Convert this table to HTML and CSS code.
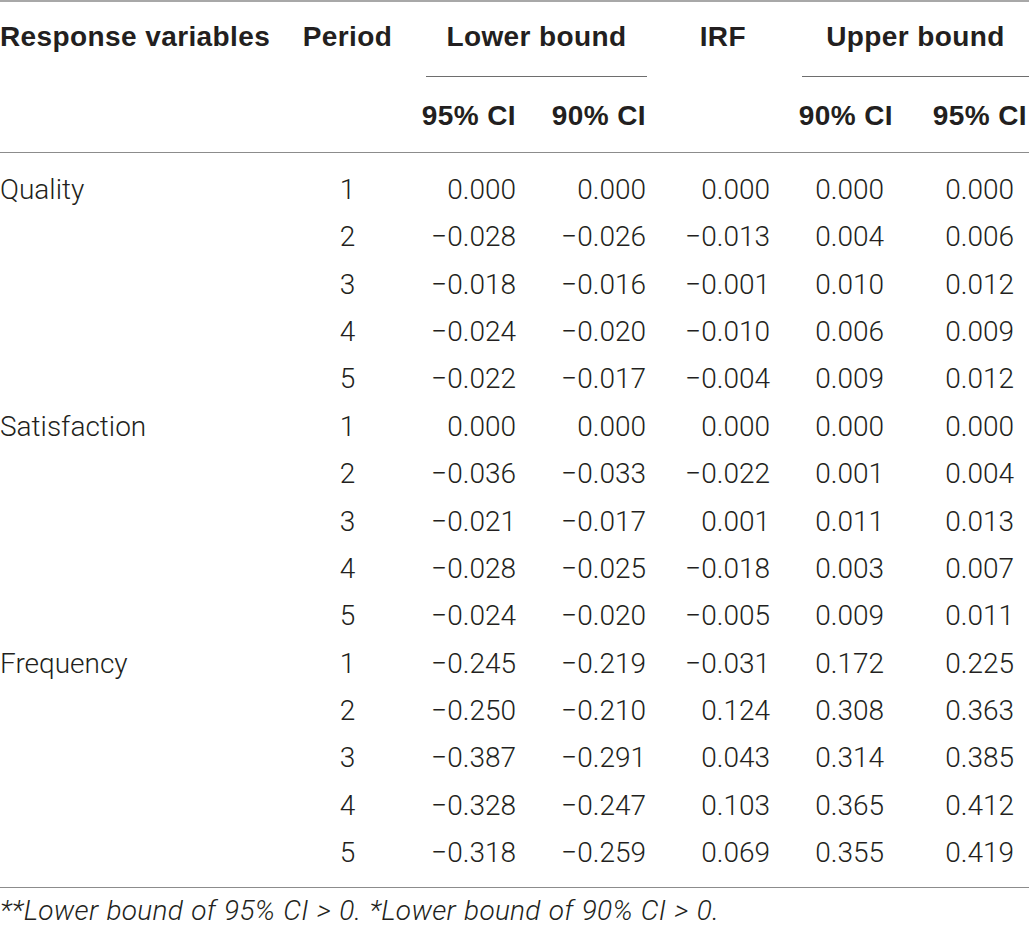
FILE: index.html
```html
<!DOCTYPE html>
<html>
<head>
<meta charset="utf-8">
<link rel="stylesheet" href="styles.css">
</head>
<body>
<table class="irf-table">
  <colgroup>
    <col class="w-var"><col class="w-per"><col class="w-l95"><col class="w-l90"><col class="w-irf"><col class="w-u90"><col class="w-u95">
  </colgroup>
  <thead>
    <tr class="h1">
      <th class="var">Response variables</th>
      <th class="per">Period</th>
      <th colspan="2" class="group"><div class="glabel lower">Lower bound</div></th>
      <th class="irfh">IRF</th>
      <th colspan="2" class="group"><div class="glabel upper">Upper bound</div></th>
    </tr>
    <tr class="h2">
      <th></th>
      <th></th>
      <th class="l95">95% CI</th>
      <th class="l90">90% CI</th>
      <th></th>
      <th class="u90">90% CI</th>
      <th class="u95">95% CI</th>
    </tr>
  </thead>
  <tbody>
    <tr class="first"><td class="var">Quality</td><td class="per">1</td><td class="l95">0.000</td><td class="l90">0.000</td><td class="irf">0.000</td><td class="u90">0.000</td><td class="u95">0.000</td></tr>
    <tr><td class="var"></td><td class="per">2</td><td class="l95">−0.028</td><td class="l90">−0.026</td><td class="irf">−0.013</td><td class="u90">0.004</td><td class="u95">0.006</td></tr>
    <tr><td class="var"></td><td class="per">3</td><td class="l95">−0.018</td><td class="l90">−0.016</td><td class="irf">−0.001</td><td class="u90">0.010</td><td class="u95">0.012</td></tr>
    <tr><td class="var"></td><td class="per">4</td><td class="l95">−0.024</td><td class="l90">−0.020</td><td class="irf">−0.010</td><td class="u90">0.006</td><td class="u95">0.009</td></tr>
    <tr><td class="var"></td><td class="per">5</td><td class="l95">−0.022</td><td class="l90">−0.017</td><td class="irf">−0.004</td><td class="u90">0.009</td><td class="u95">0.012</td></tr>
    <tr><td class="var">Satisfaction</td><td class="per">1</td><td class="l95">0.000</td><td class="l90">0.000</td><td class="irf">0.000</td><td class="u90">0.000</td><td class="u95">0.000</td></tr>
    <tr><td class="var"></td><td class="per">2</td><td class="l95">−0.036</td><td class="l90">−0.033</td><td class="irf">−0.022</td><td class="u90">0.001</td><td class="u95">0.004</td></tr>
    <tr><td class="var"></td><td class="per">3</td><td class="l95">−0.021</td><td class="l90">−0.017</td><td class="irf">0.001</td><td class="u90">0.011</td><td class="u95">0.013</td></tr>
    <tr><td class="var"></td><td class="per">4</td><td class="l95">−0.028</td><td class="l90">−0.025</td><td class="irf">−0.018</td><td class="u90">0.003</td><td class="u95">0.007</td></tr>
    <tr><td class="var"></td><td class="per">5</td><td class="l95">−0.024</td><td class="l90">−0.020</td><td class="irf">−0.005</td><td class="u90">0.009</td><td class="u95">0.011</td></tr>
    <tr><td class="var">Frequency</td><td class="per">1</td><td class="l95">−0.245</td><td class="l90">−0.219</td><td class="irf">−0.031</td><td class="u90">0.172</td><td class="u95">0.225</td></tr>
    <tr><td class="var"></td><td class="per">2</td><td class="l95">−0.250</td><td class="l90">−0.210</td><td class="irf">0.124</td><td class="u90">0.308</td><td class="u95">0.363</td></tr>
    <tr><td class="var"></td><td class="per">3</td><td class="l95">−0.387</td><td class="l90">−0.291</td><td class="irf">0.043</td><td class="u90">0.314</td><td class="u95">0.385</td></tr>
    <tr><td class="var"></td><td class="per">4</td><td class="l95">−0.328</td><td class="l90">−0.247</td><td class="irf">0.103</td><td class="u90">0.365</td><td class="u95">0.412</td></tr>
    <tr class="last"><td class="var"></td><td class="per">5</td><td class="l95">−0.318</td><td class="l90">−0.259</td><td class="irf">0.069</td><td class="u90">0.355</td><td class="u95">0.419</td></tr>
  </tbody>
</table>
<p class="note">**Lower bound of 95% CI &gt; 0. *Lower bound of 90% CI &gt; 0.</p>
</body>
</html>
```

FILE: styles.css
```css
html, body {
  margin: 0;
  padding: 0;
  background: #ffffff;
}

body {
  width: 1029px;
  color: #231f20;
  font-family: Roboto, "Liberation Sans", sans-serif;
  font-weight: 300;
}

.irf-table {
  width: 1029px;
  border-collapse: collapse;
  table-layout: fixed;
  border-top: 2px solid #a8a8a8;
  border-bottom: 1px solid #8c8c8c;
}

.w-var { width: 300px; }
.w-per { width: 95px; }
.w-l95 { width: 131px; }
.w-l90 { width: 130px; }
.w-irf { width: 124px; }
.w-u90 { width: 114px; }
.w-u95 { width: 135px; }

th, td {
  padding: 0;
  white-space: nowrap;
}

th {
  font-family: "Liberation Sans", Arial, sans-serif;
  font-weight: 700;
  font-size: 28px;
  letter-spacing: 0.4px;
  color: #231f20;
}

.h1 th {
  line-height: 70px;
  padding-bottom: 5px;
  vertical-align: top;
}

.h1 th.group {
  padding-bottom: 0;
}

.glabel {
  text-align: center;
  border-bottom: 1px solid #6e6e6e;
  line-height: 70px;
  padding-bottom: 4px;
}

.glabel.lower {
  margin-left: 31px;
  margin-right: 9px;
}

.glabel.upper {
  margin-left: 22px;
  margin-right: 0;
}

.h2 th {
  line-height: 72px;
  padding-top: 3px;
  border-bottom: 1px solid #8c8c8c;
}

th.var, td.var { text-align: left; }
th.per, td.per { text-align: center; }

th.irfh {
  text-align: right;
  padding-right: 34px;
}

td {
  font-size: 28px;
  line-height: 47.36px;
  height: 47.36px;
}

.l95 { text-align: right; padding-right: 10px; }
.l90 { text-align: right; padding-right: 10px; }
td.irf { text-align: right; padding-right: 10px; }
td.u90 { text-align: right; padding-right: 10px; }
td.u95 { text-align: right; padding-right: 15px; }
th.u90 { text-align: right; padding-right: 1px; }
th.u95 { text-align: right; padding-right: 2px; }

tr.first td { padding-top: 13px; }
tr.last td { padding-bottom: 11px; }

.note {
  margin: 0;
  padding-top: 6px;
  font-size: 28px;
  font-style: italic;
  letter-spacing: 0.3px;
  word-spacing: 1px;
  line-height: 34px;
}
```
